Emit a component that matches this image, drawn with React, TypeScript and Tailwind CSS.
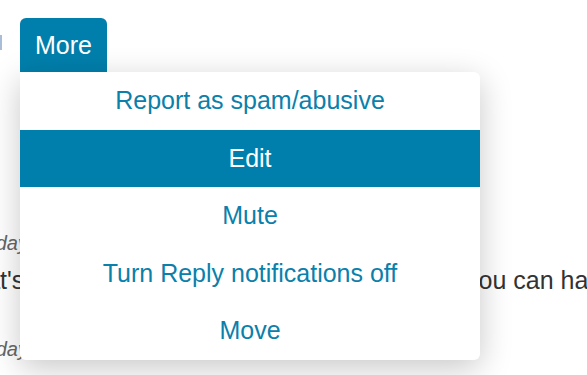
import { useState } from 'react';

const items = ['Report as spam/abusive', 'Edit', 'Mute', 'Turn Reply notifications off', 'Move'];

export default function App() {
    const [active, setActive] = useState(1);

    return (
        <div className="relative h-[375px] w-[587px] overflow-hidden bg-white font-['Liberation_Sans',Arial,sans-serif]">
            {/* toolbar */}
            <div className="flex items-start gap-[18px] pt-[18px]">
                <span className="mt-[17px] h-[15px] w-[2px] bg-[#a9bdd6]" />
                <button className="h-[54px] rounded-t-[6px] bg-[#007fac] px-[15px] text-[25px] leading-[54px] text-white">
                    More
                </button>
            </div>

            {/* comment underneath */}
            <div className="mt-[158px] whitespace-nowrap">
                <p className="-ml-[61px] text-[20px] italic leading-[26px] text-[#666]">Yesterday</p>
                <p className="mt-[6px] flex text-[25px] leading-[36px] text-[#333]">
                    <span className="-ml-[43px] w-[509px] shrink-0">That's a fair point, and honestly</span>
                    <span>you can have it both ways.</span>
                </p>
                <p className="mt-[38px] -ml-[61px] text-[20px] italic leading-[26px] text-[#666]">
                    Yesterday · great reply, thank you · 3 points, edited
                </p>
            </div>

            {/* dropdown menu */}
            <div className="absolute left-[20px] top-[72px] w-[460px] overflow-hidden rounded-b-[6px] rounded-tr-[6px] bg-white shadow-[0_8px_32px_rgba(0,0,0,0.22)]">
                {items.map((label, i) => (
                    <div
                        key={label}
                        onMouseEnter={() => setActive(i)}
                        className={`flex h-[57.6px] cursor-pointer items-center justify-center text-[25px] ${
                            active === i ? 'bg-[#007fac] text-white' : 'text-[#0a80ab]'
                        }`}
                    >
                        {label}
                    </div>
                ))}
            </div>
        </div>
    );
}
